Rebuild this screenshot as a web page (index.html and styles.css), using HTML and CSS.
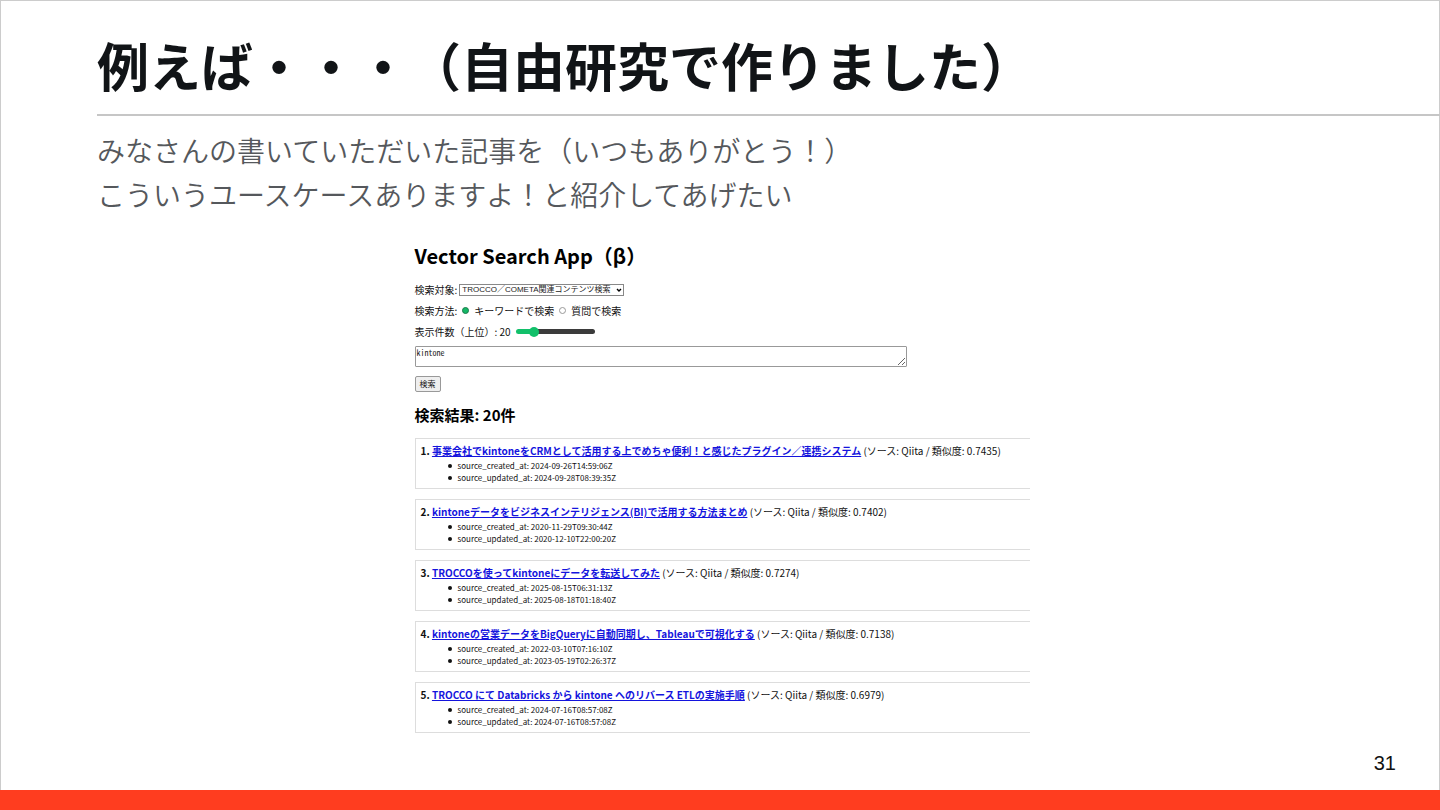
FILE: index.html
```html
<!DOCTYPE html>
<html lang="ja">
<head>
    <meta charset="UTF-8">
    <meta name="viewport" content="width=device-width, initial-scale=1.0">
    <title>例えば・・・（自由研究で作りました）</title>
    <link rel="stylesheet" href="styles.css">
</head>
<body>
<main class="slide">
    <header class="slide-header">
        <h1>例えば・・・（自由研究で作りました）</h1>
    </header>

    <div class="slide-body">
        <p class="lead">みなさんの書いていただいた記事を（いつもありがとう！）<br>こういうユースケースありますよ！と紹介してあげたい</p>

        <section class="app">
            <h2>Vector Search App（β）</h2>
            <form id="searchForm">
                <div class="field">
                    <label for="target">検索対象:</label>
                    <span class="select-wrap">
                        <select id="target">
                            <option>TROCCO／COMETA関連コンテンツ検索</option>
                        </select>
                        <svg class="arrow" viewBox="0 0 6 4"><path d="M1 1l2 2 2-2" fill="none" stroke="#000" stroke-width="1.4"/></svg>
                    </span>
                </div>
                <div class="field methods">
                    <span>検索方法:</span>
                    <input type="radio" name="method" id="keyword" checked>
                    <label for="keyword">キーワードで検索</label>
                    <input type="radio" name="method" id="question">
                    <label for="question">質問で検索</label>
                </div>
                <div class="field">
                    <label for="limit">表示件数（上位）: 20</label>
                    <input type="range" id="limit" min="1" max="100" value="20">
                </div>
                <textarea id="query" aria-label="検索語">kintone</textarea>
                <button type="button">検索</button>
            </form>

            <h3>検索結果: 20件</h3>
            <div class="results">
                <article class="result">
                    <p><strong>1. <a href="#">事業会社でkintoneをCRMとして活用する上でめちゃ便利！と感じたプラグイン／連携システム</a></strong> (ソース: Qiita / 類似度: 0.7435)</p>
                    <ul>
                        <li>source_created_at: 2024-09-26T14:59:06Z</li>
                        <li>source_updated_at: 2024-09-28T08:39:35Z</li>
                    </ul>
                </article>
                <article class="result">
                    <p><strong>2. <a href="#">kintoneデータをビジネスインテリジェンス(BI)で活用する方法まとめ</a></strong> (ソース: Qiita / 類似度: 0.7402)</p>
                    <ul>
                        <li>source_created_at: 2020-11-29T09:30:44Z</li>
                        <li>source_updated_at: 2020-12-10T22:00:20Z</li>
                    </ul>
                </article>
                <article class="result">
                    <p><strong>3. <a href="#">TROCCOを使ってkintoneにデータを転送してみた</a></strong> (ソース: Qiita / 類似度: 0.7274)</p>
                    <ul>
                        <li>source_created_at: 2025-08-15T06:31:13Z</li>
                        <li>source_updated_at: 2025-08-18T01:18:40Z</li>
                    </ul>
                </article>
                <article class="result">
                    <p><strong>4. <a href="#">kintoneの営業データをBigQueryに自動同期し、Tableauで可視化する</a></strong> (ソース: Qiita / 類似度: 0.7138)</p>
                    <ul>
                        <li>source_created_at: 2022-03-10T07:16:10Z</li>
                        <li>source_updated_at: 2023-05-19T02:26:37Z</li>
                    </ul>
                </article>
                <article class="result">
                    <p><strong>5. <a href="#">TROCCO にて Databricks から kintone へのリバース ETLの実施手順</a></strong> (ソース: Qiita / 類似度: 0.6979)</p>
                    <ul>
                        <li>source_created_at: 2024-07-16T08:57:08Z</li>
                        <li>source_updated_at: 2024-07-16T08:57:08Z</li>
                    </ul>
                </article>
            </div>
        </section>
    </div>

    <footer class="slide-footer">31</footer>
</main>
</body>
</html>
```
FILE: styles.css
```css
* { box-sizing: border-box; }
body { margin: 0; background: #fff; font-family: "Noto Sans CJK JP", sans-serif; text-spacing-trim: space-all; }
h1, h2, h3, p, ul { margin: 0; }

.slide {
    min-height: 100vh; display: flex; flex-direction: column;
    border-top: 1px solid #ccc; box-shadow: inset 1px 0 #ccc, inset -1px 0 #ccc;
}
.slide-header { margin-left: 97px; padding: 26px 0 12px; border-bottom: 2px solid #c6c6c6; }
h1 { font-size: 52px; line-height: 75px; font-weight: bold; color: #111417; }
.slide-body { flex: 1; padding: 12px 93px 0 97px; }
.lead { font-size: 28px; line-height: 44px; font-weight: 350; color: #55585c; }

.app { max-width: 615px; margin: 25px auto 0; font-size: 10px; color: #111; }
.app h2 { font-size: 20px; line-height: 30px; color: #000; }
#searchForm { display: flex; flex-direction: column; align-items: flex-start; margin-top: 8px; }
.field { display: flex; align-items: center; gap: 2px; height: 21px; line-height: 21px; }
.methods { gap: 5px; }
.select-wrap { position: relative; display: flex; }
select {
    appearance: none; height: 12px; padding: 0 12px 0 2px; margin: 0; border: 1px solid #888; border-radius: 0;
    background: #fff; color: #222; font: 8px/10px "Liberation Sans", "Noto Sans CJK JP", sans-serif;
}
.arrow { position: absolute; right: 2px; top: 4px; width: 6px; height: 4px; pointer-events: none; }
input[type="radio"] {
    appearance: none; width: 7px; height: 7px; margin: 0; border: 1px solid #999; border-radius: 50%; background: #fff;
}
input[type="radio"]:checked { border-color: #1b7a4b; background: #14b866; }
input[type="range"] {
    appearance: none; width: 79px; height: 5px; margin: 0 0 0 3px; border-radius: 3px;
    background: linear-gradient(to right, #12c06a 22%, #3b3b3b 22%);
}
input[type="range"]::-webkit-slider-thumb {
    appearance: none; width: 10px; height: 10px; border-radius: 50%; background: #12c06a;
}
textarea {
    width: 80%; height: 21px; margin: 4px 0 9px; padding: 1px; border: 1px solid #999; border-radius: 1px;
    overflow: hidden; color: #222; font: 8px/10px "Noto Sans Mono CJK JP", "Liberation Mono", monospace;
}
button {
    height: 16px; padding: 0 4px; border: 1px solid #999; border-radius: 2px;
    background: #efefef; color: #111; font: 8px/14px "Noto Sans CJK JP", sans-serif;
}
.app h3 { margin: 12px 0; font-size: 15px; line-height: 22px; color: #000; }
.results { display: flex; flex-direction: column; gap: 10px; }
.result { padding: 4px 0 4px 5px; border: 1px solid #ddd; border-right: 0; }
.result p { line-height: 16px; white-space: nowrap; }
.result a { color: #1414dd; }
.result ul { margin-top: 1px; padding-left: 27px; list-style: none; font-size: 8px; line-height: 12px; }
.result li { display: flex; align-items: center; gap: 6px; }
.result li::before { content: ""; width: 4px; height: 4px; border-radius: 50%; background: #111; }

.slide-footer {
    border-bottom: 20px solid #ff3d1f; padding: 0 44px 15px; text-align: right;
    font: 20px/24px "Liberation Sans", sans-serif; color: #111;
}
```
